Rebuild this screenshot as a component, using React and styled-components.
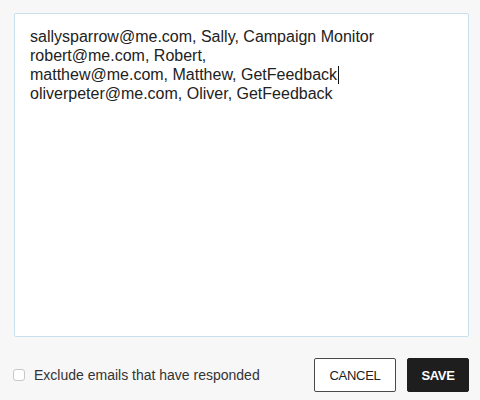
import React from "react";
import styled, { createGlobalStyle } from "styled-components";

const GlobalStyle = createGlobalStyle`
  html, body {
    margin: 0;
    padding: 0;
    background: #f7f7f7;
    font-family: "Liberation Sans", Arial, sans-serif;
  }
`;

const rows = [
  "sallysparrow@me.com, Sally, Campaign Monitor",
  "robert@me.com, Robert,",
  "matthew@me.com, Matthew, GetFeedback",
  "oliverpeter@me.com, Oliver, GetFeedback",
];

const App = () => {
  return (
    <>
      <GlobalStyle />
      <Page>
        <Editor>
          {rows.map((row, i) => (
            <Line key={i}>
              {row}
              {i === 2 && <Caret />}
            </Line>
          ))}
        </Editor>

        <Footer>
          <CheckLabel>
            <Box type="checkbox" />
            Exclude emails that have responded
          </CheckLabel>
          <Actions>
            <Button>CANCEL</Button>
            <Button primary>SAVE</Button>
          </Actions>
        </Footer>
      </Page>
    </>
  );
};

export default App;

const Page = styled.div`
  width: 480px;
  height: 400px;
  box-sizing: border-box;
  padding: 13px 11px 0 14px;
  display: flex;
  flex-direction: column;
`;

const Editor = styled.div`
  height: 324px;
  box-sizing: border-box;
  background: #fff;
  border: 1px solid #c9dfec;
  border-radius: 2px;
  padding: 13px 15px;
  color: #222;
  font-size: 16px;
  line-height: 19px;
`;

const Line = styled.div`
  white-space: pre;
`;

const Caret = styled.span`
  display: inline-block;
  width: 1px;
  height: 18px;
  margin-left: 1px;
  vertical-align: -4px;
  background: #111;
`;

const Footer = styled.div`
  display: flex;
  align-items: center;
  justify-content: space-between;
  margin-top: 21px;
`;

const CheckLabel = styled.label`
  display: flex;
  align-items: center;
  gap: 9px;
  font-size: 14px;
  color: #333;
`;

const Box = styled.input`
  appearance: none;
  margin: 0 0 0 -1px;
  width: 12px;
  height: 12px;
  border: 1px solid #c8c8c8;
  border-radius: 3px;
  background: #fff;
`;

const Actions = styled.div`
  display: flex;
  gap: 11px;
`;

const Button = styled.button`
  height: 34px;
  width: ${(p) => (p.primary ? "62px" : "82px")};
  box-sizing: border-box;
  padding: 0;
  border: 1px solid ${(p) => (p.primary ? "#1e1e1e" : "#4a4a4a")};
  border-radius: 2px;
  background: ${(p) => (p.primary ? "#1e1e1e" : "#fff")};
  color: ${(p) => (p.primary ? "#fff" : "#222")};
  font-family: "Liberation Sans", Arial, sans-serif;
  font-size: 13px;
  font-weight: ${(p) => (p.primary ? 700 : 400)};
  letter-spacing: -0.3px;
`;
